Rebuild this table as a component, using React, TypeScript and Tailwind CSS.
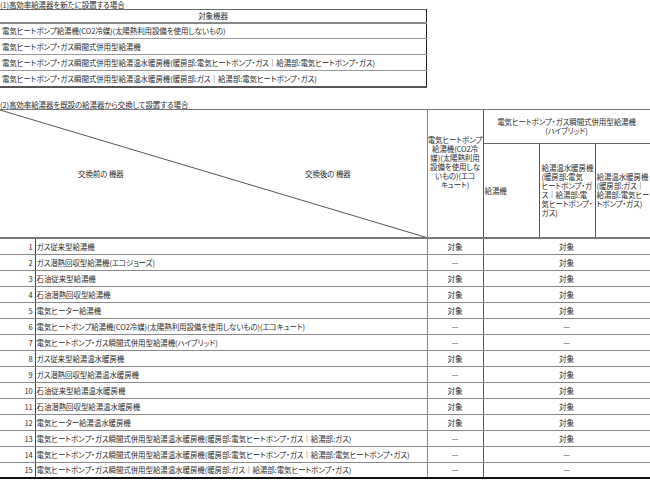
const newRows = [
  "電気ヒートポンプ給湯機(CO2冷媒)(太陽熱利用設備を使用しないもの)",
  "電気ヒートポンプ・ガス瞬間式併用型給湯機",
  "電気ヒートポンプ・ガス瞬間式併用型給湯温水暖房機(暖房部:電気ヒートポンプ・ガス｜給湯部:電気ヒートポンプ・ガス)",
  "電気ヒートポンプ・ガス瞬間式併用型給湯温水暖房機(暖房部:ガス｜給湯部:電気ヒートポンプ・ガス)",
];

type Swap = { name: string; eco: boolean; hybrid: boolean };

const swapRows: Swap[] = [
  { name: "ガス従来型給湯機", eco: true, hybrid: true },
  { name: "ガス潜熱回収型給湯機(エコジョーズ)", eco: false, hybrid: true },
  { name: "石油従来型給湯機", eco: true, hybrid: true },
  { name: "石油潜熱回収型給湯機", eco: true, hybrid: true },
  { name: "電気ヒーター給湯機", eco: true, hybrid: true },
  { name: "電気ヒートポンプ給湯機(CO2冷媒)(太陽熱利用設備を使用しないもの)(エコキュート)", eco: false, hybrid: false },
  { name: "電気ヒートポンプ・ガス瞬間式併用型給湯機(ハイブリッド)", eco: false, hybrid: false },
  { name: "ガス従来型給湯温水暖房機", eco: true, hybrid: true },
  { name: "ガス潜熱回収型給湯温水暖房機", eco: false, hybrid: true },
  { name: "石油従来型給湯温水暖房機", eco: true, hybrid: true },
  { name: "石油潜熱回収型給湯温水暖房機", eco: true, hybrid: true },
  { name: "電気ヒーター給湯温水暖房機", eco: true, hybrid: true },
  { name: "電気ヒートポンプ・ガス瞬間式併用型給湯温水暖房機(暖房部:電気ヒートポンプ・ガス｜給湯部:ガス)", eco: false, hybrid: true },
  { name: "電気ヒートポンプ・ガス瞬間式併用型給湯温水暖房機(暖房部:電気ヒートポンプ・ガス｜給湯部:電気ヒートポンプ・ガス)", eco: false, hybrid: false },
  { name: "電気ヒートポンプ・ガス瞬間式併用型給湯温水暖房機(暖房部:ガス｜給湯部:電気ヒートポンプ・ガス)", eco: false, hybrid: false },
];

function Mark({ on }: { on: boolean }) {
  return <>{on ? "対象" : "—"}</>;
}

export default function App() {
  return (
    <div className="w-[650px] h-[482px] overflow-hidden bg-white text-[7.5px] leading-[9px] tracking-[-0.1px] text-[#2a2a2a] [font-family:'Noto_Sans_CJK_JP',sans-serif] [font-feature-settings:'palt']">
      {/* (1) */}
      <div className="h-[9px] leading-[9px]">(1)高効率給湯器を新たに設置する場合</div>
      <table className="w-[427px] table-fixed border-collapse">
        <tbody>
          <tr className="h-[13px]">
            <td className="border-t border-t-[#666] border-r border-r-[#222] border-b-2 border-b-[#888] text-center">対象機器</td>
          </tr>
          {newRows.map((r, i) => (
            <tr key={i} className="h-[16px]">
              <td
                className={`border-r border-r-[#222] pl-[2px] whitespace-nowrap ${
                  i === newRows.length - 1 ? "border-b-2 border-b-[#555]" : "border-b border-b-[#999]"
                }`}
              >
                {r}
              </td>
            </tr>
          ))}
        </tbody>
      </table>

      {/* (2) */}
      <div className="mt-[12px] h-[9px] leading-[9px]">(2)高効率給湯器を既設の給湯器から交換して設置する場合</div>
      <table className="w-[650px] table-fixed border-collapse">
        <colgroup>
          <col className="w-[35px]" />
          <col className="w-[392px]" />
          <col className="w-[56px]" />
          <col className="w-[56px]" />
          <col className="w-[56px]" />
          <col className="w-[55px]" />
        </colgroup>
        <tbody>
          <tr className="h-[34px]">
            <td
              colSpan={2}
              rowSpan={2}
              className="relative border-t border-t-[#777] border-b-2 border-b-[#777] p-0"
            >
              <svg className="absolute inset-0 h-full w-full" preserveAspectRatio="none" viewBox="0 0 100 100">
                <line x1="0" y1="0" x2="100" y2="100" stroke="#555" strokeWidth="1" vectorEffect="non-scaling-stroke" />
              </svg>
              <div className="relative flex">
                <span className="w-[78px]" />
                <span className="w-[227px]">交換前の 機器</span>
                <span>交換後の 機器</span>
              </div>
            </td>
            <td
              rowSpan={2}
              className="border-t border-t-[#777] border-l border-l-[#888] border-b-2 border-b-[#777] text-center align-middle whitespace-nowrap pb-[22px]"
            >
              電気ヒートポンプ
              <br />
              給湯機(CO2冷
              <br />
              媒)(太陽熱利用
              <br />
              設備を使用しな
              <br />
              いもの)(エコ
              <br />
              キュート)
            </td>
            <td
              colSpan={3}
              className="border-t border-t-[#777] border-l border-l-[#555] border-r border-r-[#333] border-b border-b-[#666] text-center"
            >
              電気ヒートポンプ・ガス瞬間式併用型給湯機
              <br />
              (ハイブリッド)
            </td>
          </tr>
          <tr className="h-[95px]">
            <td className="border-l border-l-[#555] border-b-2 border-b-[#777] pl-[1px]">給湯機</td>
            <td className="border-l border-l-[#555] border-b-2 border-b-[#777] pl-[2px] whitespace-nowrap">
              給湯温水暖房機
              <br />
              (暖房部:電気
              <br />
              ヒートポンプ・ガ
              <br />
              ス｜給湯部:電
              <br />
              気ヒートポンプ・
              <br />
              ガス)
            </td>
            <td className="border-l border-l-[#555] border-r border-r-[#333] border-b-2 border-b-[#777] pl-[1px] whitespace-nowrap">
              給湯温水暖房機
              <br />
              (暖房部:ガス｜
              <br />
              給湯部:電気ヒー
              <br />
              トポンプ・ガス)
            </td>
          </tr>
          {swapRows.map((r, i) => {
            const last = i === swapRows.length - 1;
            const rowLine = last ? "border-b-2 border-b-[#111]" : "border-b border-b-[#8a8a8a]";
            return (
              <tr key={i} className="h-[16px]">
                <td className={`border-r border-r-[#444] pr-[2px] text-right ${rowLine}`}>{i + 1}</td>
                <td className={`pl-[1px] whitespace-nowrap ${rowLine}`}>{r.name}</td>
                <td className={`border-l border-l-[#888] text-center ${rowLine}`}>
                  <Mark on={r.eco} />
                </td>
                <td colSpan={3} className={`border-l border-l-[#555] border-r border-r-[#333] text-center ${rowLine}`}>
                  <Mark on={r.hybrid} />
                </td>
              </tr>
            );
          })}
        </tbody>
      </table>
    </div>
  );
}
